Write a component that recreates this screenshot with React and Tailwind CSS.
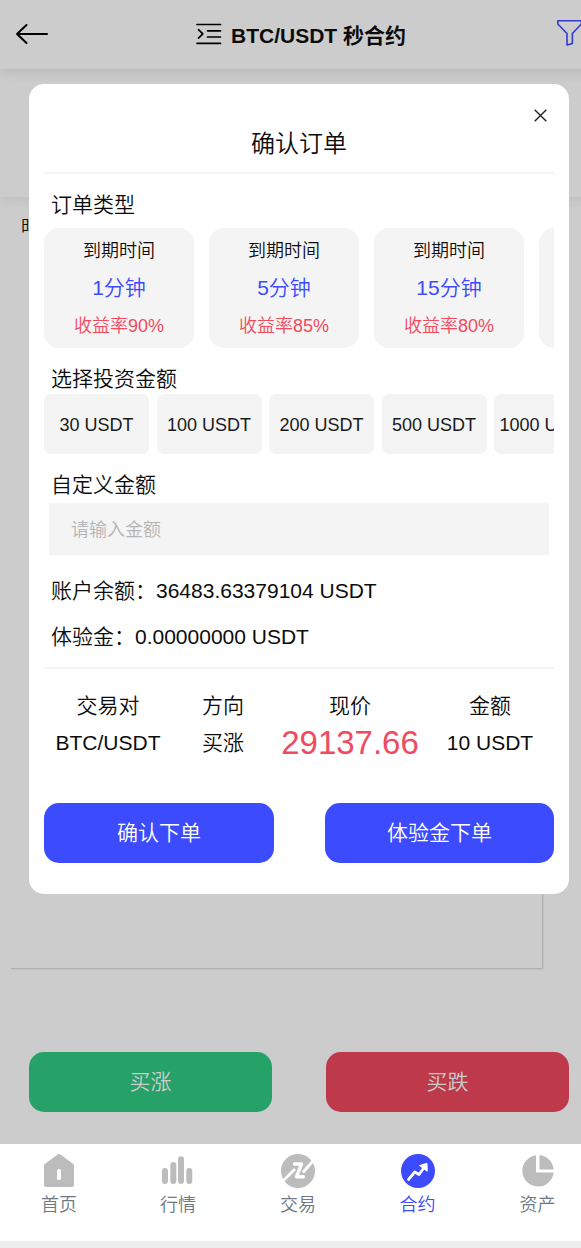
import React from "react";

const plans = [
  { time: "1分钟", rate: "收益率90%" },
  { time: "5分钟", rate: "收益率85%" },
  { time: "15分钟", rate: "收益率80%" },
];

const amounts = ["30 USDT", "100 USDT", "200 USDT", "500 USDT", "1000 USDT"];

function BackIcon() {
  return (
    <svg width="34" height="22" viewBox="0 0 34 22" fill="none" stroke="#000" strokeWidth="2" strokeLinecap="round" strokeLinejoin="round">
      <path d="M32 11H2M11.5 2L2 11L11.5 20" />
    </svg>
  );
}

function MenuIcon() {
  return (
    <svg width="26" height="22" viewBox="0 0 26 22" fill="none" stroke="#000" strokeWidth="1.7" strokeLinecap="round" strokeLinejoin="round">
      <path d="M1 1.5H24.5M1 20.3H24.5M11.5 7.8H24.5M11.5 14H24.5M2.5 6.6L6.8 10.9L2.5 15.2" />
    </svg>
  );
}

function FilterIcon() {
  return (
    <svg width="26" height="28" viewBox="0 0 26 28" fill="none" stroke="#323ace" strokeWidth="1.6" strokeLinejoin="round">
      <path d="M1.8 1.8H25.4V5L16.4 14.5V24.4L11 26V14.5L1.8 5Z" />
    </svg>
  );
}

function HomeIcon() {
  return (
    <svg width="36" height="36" viewBox="0 0 36 36">
      <path fill="#bcbcbc" d="M16.6 1.6Q18 .6 19.4 1.6L31.6 10.6Q33 11.6 33 13V31.5Q33 34 30.5 34H5.5Q3 34 3 31.5V13Q3 11.6 4.4 10.6Z" />
      <rect x="16" y="16" width="4" height="11" rx="1.6" fill="#fff" />
    </svg>
  );
}

function MarketIcon() {
  return (
    <svg width="36" height="36" viewBox="0 0 36 36" fill="#bcbcbc">
      <rect x="2" y="15" width="6" height="16" rx="3" />
      <rect x="10.3" y="9" width="6" height="22" rx="3" />
      <rect x="18" y="3.3" width="6" height="27.7" rx="3" />
      <rect x="26.3" y="15" width="6" height="16" rx="3" />
    </svg>
  );
}

function TradeIcon() {
  return (
    <svg width="36" height="36" viewBox="0 0 36 36">
      <circle cx="18" cy="18" r="17" fill="#bcbcbc" />
      <g fill="none" stroke="#fff" strokeLinejoin="round">
        <path strokeWidth="2.8" d="M2 29L15 16M23 19.5L35 5.5" />
        <path strokeWidth="3.4" strokeLinecap="round" d="M14.5 11H21.5L16.5 23.7H23.5" />
      </g>
    </svg>
  );
}

function ContractIcon() {
  return (
    <svg width="36" height="36" viewBox="0 0 36 36">
      <circle cx="18" cy="18" r="17" fill="#3d4bff" />
      <path d="M8.5 26.5L14.8 19L19 21.5L24.5 14" fill="none" stroke="#fff" strokeWidth="2.8" strokeLinecap="round" strokeLinejoin="round" />
      <path d="M19.5 12.6L27 10.3L27.2 18.2Z" fill="#fff" stroke="#fff" strokeWidth="1" strokeLinejoin="round" />
    </svg>
  );
}

function AssetIcon() {
  return (
    <svg width="36" height="36" viewBox="0 0 36 36" fill="#bcbcbc">
      <path d="M16 2.3A15.7 15.7 0 1 0 33.7 19.6H16Z" />
      <path d="M19.5 2.1A15.8 15.8 0 0 1 33.7 16.4H19.5Z" />
    </svg>
  );
}

const tabs = [
  { label: "首页", Icon: HomeIcon },
  { label: "行情", Icon: MarketIcon },
  { label: "交易", Icon: TradeIcon },
  { label: "合约", Icon: ContractIcon, active: true },
  { label: "资产", Icon: AssetIcon },
];

function Backdrop() {
  return (
    <div className="flex h-[1144px] flex-col">
      <header className="relative z-10 flex h-[69px] shrink-0 items-center justify-between bg-[#cccccc] pb-[1px] pl-[15px] pr-[16px] shadow-[0_2px_12px_rgba(0,0,0,0.12)]">
        <BackIcon />
        <div className="flex items-center gap-[9px] pr-[3px]">
          <MenuIcon />
          <h1 className="pt-[3px] text-[21px] font-bold leading-[30px]">BTC/USDT 秒合约</h1>
        </div>
        <div className="pb-[3px]"><FilterIcon /></div>
      </header>
      <div className="h-[128px] shrink-0 shadow-[0_2px_12px_rgba(0,0,0,0.08)]" />
      <div className="h-[60px] shrink-0 pl-[21px] pt-[15px] text-[18px] leading-[30px]">时间</div>
      <div className="ml-[11px] h-[712px] w-[532px] shrink-0 border-b border-r border-[#b1b1b1] shadow-[1px_1px_0_#c3c3c3]" />
      <div className="mt-[83px] flex justify-between pl-[29px] pr-[29px] text-[21px] text-[#cccccc]">
        <button className="h-[60px] w-[243px] rounded-[15px] bg-[#26a269]">买涨</button>
        <button className="h-[60px] w-[243px] rounded-[15px] bg-[#be3a4b]">买跌</button>
      </div>
    </div>
  );
}

function OrderDialog() {
  return (
    <section className="absolute left-[29px] top-[84px] z-20 flex h-[810px] w-[540px] flex-col rounded-[15px] bg-white px-[15px] text-[21px]">
      <button className="flex h-[41px] shrink-0 items-end justify-end pb-[3px] pr-[7px]">
        <svg width="13" height="13" viewBox="0 0 13 13" stroke="#222" strokeWidth="1.4">
          <path d="M.7 .7L12.3 12.3M12.3 .7L.7 12.3" />
        </svg>
      </button>
      <h2 className="h-[49px] shrink-0 border-b-2 border-[#f4f4f4] text-center text-[24px] leading-[38px]">确认订单</h2>
      <h3 className="mt-[15px] h-[39px] shrink-0 pl-[7px] leading-[32px]">订单类型</h3>
      <div className="flex gap-[15px] overflow-hidden">
        {plans.map((p) => (
          <div key={p.time} className="flex h-[120px] w-[150px] shrink-0 flex-col items-center rounded-[15px] bg-[#f4f4f4] pt-[4px] text-[18px]">
            <span className="leading-[39px]">到期时间</span>
            <span className="text-[21px] leading-[34px] text-[#3d4bff]">{p.time}</span>
            <span className="leading-[43px] text-[#f04a5e]">{p.rate}</span>
          </div>
        ))}
        <div className="h-[120px] w-[150px] shrink-0 rounded-[15px] bg-[#f4f4f4]" />
      </div>
      <h3 className="mt-[15px] h-[31px] shrink-0 pl-[7px] leading-[32px]">选择投资金额</h3>
      <div className="flex gap-[7.5px] overflow-hidden">
        {amounts.map((a) => (
          <button key={a} className="h-[60px] w-[105px] shrink-0 whitespace-nowrap rounded-[7px] bg-[#f4f4f4] pt-[2px] text-[18px] text-[#1a1a1a]">{a}</button>
        ))}
      </div>
      <h3 className="mt-[15px] h-[34px] shrink-0 pl-[7px] leading-[32px]">自定义金额</h3>
      <input className="mx-[5px] h-[52px] shrink-0 bg-[#f4f4f4] px-[22px] pt-[2px] text-[18px] placeholder:text-[#b4b4b4]" placeholder="请输入金额" />
      <p className="mt-[13px] h-[46px] shrink-0 pl-[7px] leading-[46px]">账户余额：36483.63379104 USDT</p>
      <p className="h-[55px] shrink-0 border-b-2 border-[#f4f4f4] pl-[7px] leading-[46px]">体验金：0.00000000 USDT</p>
      <div className="mt-[18px] grid shrink-0 grid-cols-[128px_102px_152px_128px] grid-rows-[37px_37px] text-center leading-[37px]">
        <span>交易对</span>
        <span>方向</span>
        <span>现价</span>
        <span>金额</span>
        <span>BTC/USDT</span>
        <span>买涨</span>
        <span className="text-[33px] text-[#f04a5e]">29137.66</span>
        <span>10 USDT</span>
      </div>
      <div className="mt-[42px] flex justify-between text-white">
        <button className="h-[60px] w-[230px] rounded-[15px] bg-[#3d4bff]">确认下单</button>
        <button className="h-[60px] w-[229px] rounded-[15px] bg-[#3d4bff]">体验金下单</button>
      </div>
    </section>
  );
}

export default function App() {
  return (
    <div className="h-[1248px] w-full overflow-hidden bg-[#cccccc] font-['Liberation_Sans','Noto_Sans_CJK_SC',sans-serif] font-[350] text-[#0c0c0c]">
      <div className="relative w-[598px]">
        <Backdrop />
        <OrderDialog />
        <nav className="grid h-[97px] grid-cols-[118px_120px_120px_119px_121px] bg-white">
          {tabs.map(({ label, Icon, active }) => (
            <a key={label} className="flex flex-col items-center pt-[9px]">
              <Icon />
              <span className={active ? "text-[18px] leading-[33px] text-[#3d4bff]" : "text-[18px] leading-[33px] text-[#6f7885]"}>{label}</span>
            </a>
          ))}
        </nav>
        <div className="h-[7px] bg-[#eeeeee]" />
      </div>
    </div>
  );
}
